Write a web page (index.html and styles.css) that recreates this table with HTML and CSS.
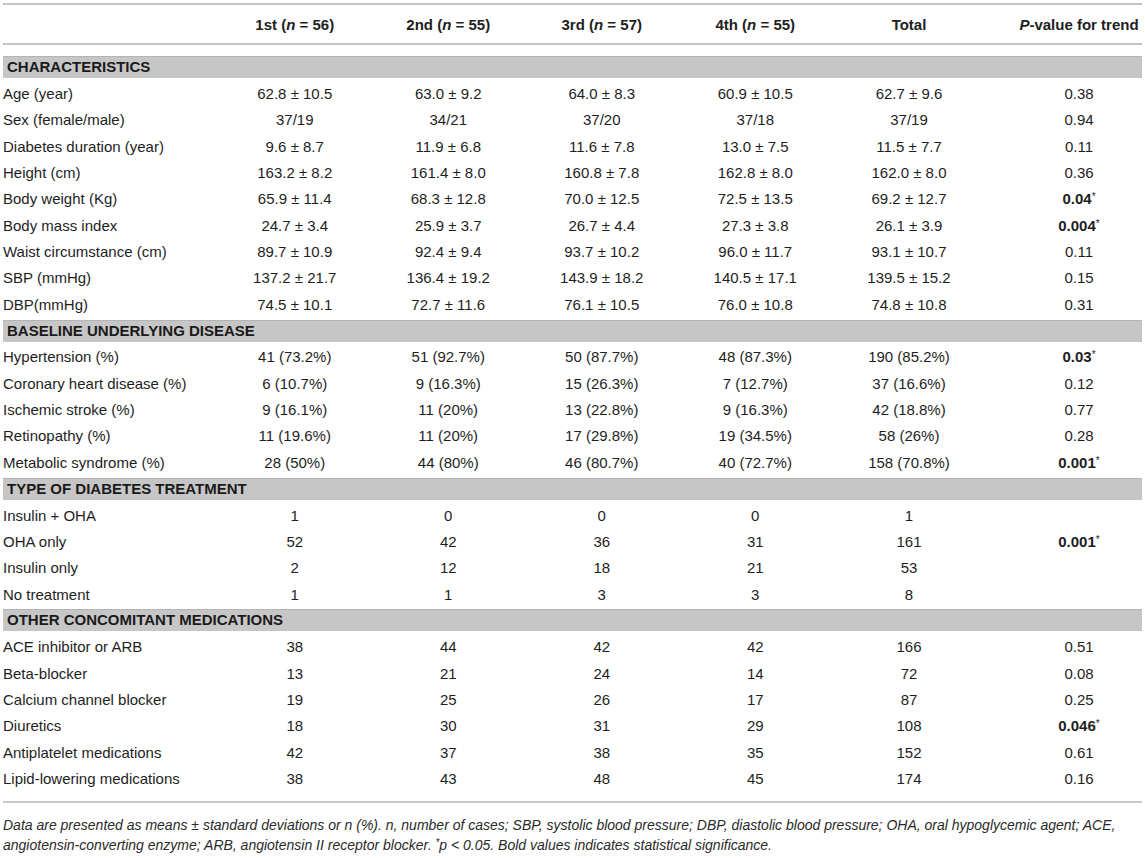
FILE: index.html
```html
<!DOCTYPE html>
<html>
<head>
<meta charset="utf-8">
<link rel="stylesheet" href="styles.css">
</head>
<body>
<div class="page">
<table class="tbl">
<colgroup>
<col class="c-label"><col class="c-q"><col class="c-q"><col class="c-q"><col class="c-q"><col class="c-tot"><col class="c-p">
</colgroup>
<thead>
<tr class="head">
<th></th>
<th>1st (<i>n</i> = 56)</th>
<th>2nd (<i>n</i> = 55)</th>
<th>3rd (<i>n</i> = 57)</th>
<th>4th (<i>n</i> = 55)</th>
<th>Total</th>
<th class="pcol"><i>P</i>-value for trend</th>
</tr>
</thead>
<tbody>
<tr class="spacer"><td colspan="7"></td></tr>
<tr class="sect"><td colspan="7"><div class="band">CHARACTERISTICS</div></td></tr>
<tr><td>Age (year)</td><td>62.8 ± 10.5</td><td>63.0 ± 9.2</td><td>64.0 ± 8.3</td><td>60.9 ± 10.5</td><td>62.7 ± 9.6</td><td class="pcol">0.38</td></tr>
<tr><td>Sex (female/male)</td><td>37/19</td><td>34/21</td><td>37/20</td><td>37/18</td><td>37/19</td><td class="pcol">0.94</td></tr>
<tr><td>Diabetes duration (year)</td><td>9.6 ± 8.7</td><td>11.9 ± 6.8</td><td>11.6 ± 7.8</td><td>13.0 ± 7.5</td><td>11.5 ± 7.7</td><td class="pcol">0.11</td></tr>
<tr><td>Height (cm)</td><td>163.2 ± 8.2</td><td>161.4 ± 8.0</td><td>160.8 ± 7.8</td><td>162.8 ± 8.0</td><td>162.0 ± 8.0</td><td class="pcol">0.36</td></tr>
<tr><td>Body weight (Kg)</td><td>65.9 ± 11.4</td><td>68.3 ± 12.8</td><td>70.0 ± 12.5</td><td>72.5 ± 13.5</td><td>69.2 ± 12.7</td><td class="pcol"><b>0.04</b><sup>*</sup></td></tr>
<tr><td>Body mass index</td><td>24.7 ± 3.4</td><td>25.9 ± 3.7</td><td>26.7 ± 4.4</td><td>27.3 ± 3.8</td><td>26.1 ± 3.9</td><td class="pcol"><b>0.004</b><sup>*</sup></td></tr>
<tr><td>Waist circumstance (cm)</td><td>89.7 ± 10.9</td><td>92.4 ± 9.4</td><td>93.7 ± 10.2</td><td>96.0 ± 11.7</td><td>93.1 ± 10.7</td><td class="pcol">0.11</td></tr>
<tr><td>SBP (mmHg)</td><td>137.2 ± 21.7</td><td>136.4 ± 19.2</td><td>143.9 ± 18.2</td><td>140.5 ± 17.1</td><td>139.5 ± 15.2</td><td class="pcol">0.15</td></tr>
<tr><td>DBP(mmHg)</td><td>74.5 ± 10.1</td><td>72.7 ± 11.6</td><td>76.1 ± 10.5</td><td>76.0 ± 10.8</td><td>74.8 ± 10.8</td><td class="pcol">0.31</td></tr>
<tr class="sect"><td colspan="7"><div class="band">BASELINE UNDERLYING DISEASE</div></td></tr>
<tr><td>Hypertension (%)</td><td>41 (73.2%)</td><td>51 (92.7%)</td><td>50 (87.7%)</td><td>48 (87.3%)</td><td>190 (85.2%)</td><td class="pcol"><b>0.03</b><sup>*</sup></td></tr>
<tr><td>Coronary heart disease (%)</td><td>6 (10.7%)</td><td>9 (16.3%)</td><td>15 (26.3%)</td><td>7 (12.7%)</td><td>37 (16.6%)</td><td class="pcol">0.12</td></tr>
<tr><td>Ischemic stroke (%)</td><td>9 (16.1%)</td><td>11 (20%)</td><td>13 (22.8%)</td><td>9 (16.3%)</td><td>42 (18.8%)</td><td class="pcol">0.77</td></tr>
<tr><td>Retinopathy (%)</td><td>11 (19.6%)</td><td>11 (20%)</td><td>17 (29.8%)</td><td>19 (34.5%)</td><td>58 (26%)</td><td class="pcol">0.28</td></tr>
<tr><td>Metabolic syndrome (%)</td><td>28 (50%)</td><td>44 (80%)</td><td>46 (80.7%)</td><td>40 (72.7%)</td><td>158 (70.8%)</td><td class="pcol"><b>0.001</b><sup>*</sup></td></tr>
<tr class="sect"><td colspan="7"><div class="band">TYPE OF DIABETES TREATMENT</div></td></tr>
<tr><td>Insulin + OHA</td><td>1</td><td>0</td><td>0</td><td>0</td><td>1</td><td class="pcol"></td></tr>
<tr><td>OHA only</td><td>52</td><td>42</td><td>36</td><td>31</td><td>161</td><td class="pcol"><b>0.001</b><sup>*</sup></td></tr>
<tr><td>Insulin only</td><td>2</td><td>12</td><td>18</td><td>21</td><td>53</td><td class="pcol"></td></tr>
<tr><td>No treatment</td><td>1</td><td>1</td><td>3</td><td>3</td><td>8</td><td class="pcol"></td></tr>
<tr class="sect"><td colspan="7"><div class="band">OTHER CONCOMITANT MEDICATIONS</div></td></tr>
<tr><td>ACE inhibitor or ARB</td><td>38</td><td>44</td><td>42</td><td>42</td><td>166</td><td class="pcol">0.51</td></tr>
<tr><td>Beta-blocker</td><td>13</td><td>21</td><td>24</td><td>14</td><td>72</td><td class="pcol">0.08</td></tr>
<tr><td>Calcium channel blocker</td><td>19</td><td>25</td><td>26</td><td>17</td><td>87</td><td class="pcol">0.25</td></tr>
<tr><td>Diuretics</td><td>18</td><td>30</td><td>31</td><td>29</td><td>108</td><td class="pcol"><b>0.046</b><sup>*</sup></td></tr>
<tr><td>Antiplatelet medications</td><td>42</td><td>37</td><td>38</td><td>35</td><td>152</td><td class="pcol">0.61</td></tr>
<tr class="last"><td>Lipid-lowering medications</td><td>38</td><td>43</td><td>48</td><td>45</td><td>174</td><td class="pcol">0.16</td></tr>
</tbody>
</table>
<p class="note">Data are presented as means ± standard deviations or n (%). n, number of cases; SBP, systolic blood pressure; DBP, diastolic blood pressure; OHA, oral hypoglycemic agent; ACE,<br>angiotensin-converting enzyme; ARB, angiotensin II receptor blocker. <span class="ast">*</span>p &lt; 0.05. Bold values indicates statistical significance.</p>
</div>
</body>
</html>
```

FILE: styles.css
```css
html, body {
  margin: 0;
  padding: 0;
  background: #ffffff;
}
.page {
  padding: 3px 3px 0 3px;
  width: 1139px;
  font-family: "Liberation Sans", Arial, sans-serif;
  color: #1e1e1e;
}
.tbl {
  width: 1139px;
  border-collapse: collapse;
  table-layout: fixed;
  font-size: 15px;
}
.c-label { width: 215px; }
.c-q { width: 153.5px; }
.c-tot { width: 154px; }
.c-p { width: 156px; }
.tbl td, .tbl th {
  padding: 0;
  text-align: center;
  white-space: nowrap;
}
.tbl td:first-child {
  text-align: left;
  padding-left: 0;
}
.tbl .pcol {
  padding-left: 30px;
}
.head th {
  height: 38px;
  font-weight: bold;
  border-top: 2px solid #c4c4c4;
  border-bottom: 2px solid #c4c4c4;
}
.spacer td {
  height: 9px;
}
.tbl tbody tr {
  height: 26.35px;
}
.tbl tbody tr.spacer {
  height: 9px;
}
.sect td {
  padding: 2px 0;
}
.band {
  height: 22px;
  line-height: 22px;
  background: #c6c6c6;
  box-shadow: inset 0 1px 0 #b4b4b4;
  font-weight: bold;
  padding-left: 4px;
  text-align: left;
  color: #1a1a1a;
}
.tbl tr.last td {
  border-bottom: 2px solid #c8c8c8;
  padding-bottom: 0;
}
.tbl tr.last {
  height: 37px;
}
.tbl tr.last td {
  vertical-align: top;
  padding-top: 5px;
}
sup {
  font-size: 10px;
  vertical-align: 4px;
  line-height: 0;
  font-weight: normal;
}
.note {
  margin: 12px 0 0 0;
  font-size: 14px;
  line-height: 20px;
  font-style: italic;
  color: #2a2a2a;
  white-space: nowrap;
}
.ast {
  font-size: 10px;
  vertical-align: 4px;
  line-height: 0;
}
```
